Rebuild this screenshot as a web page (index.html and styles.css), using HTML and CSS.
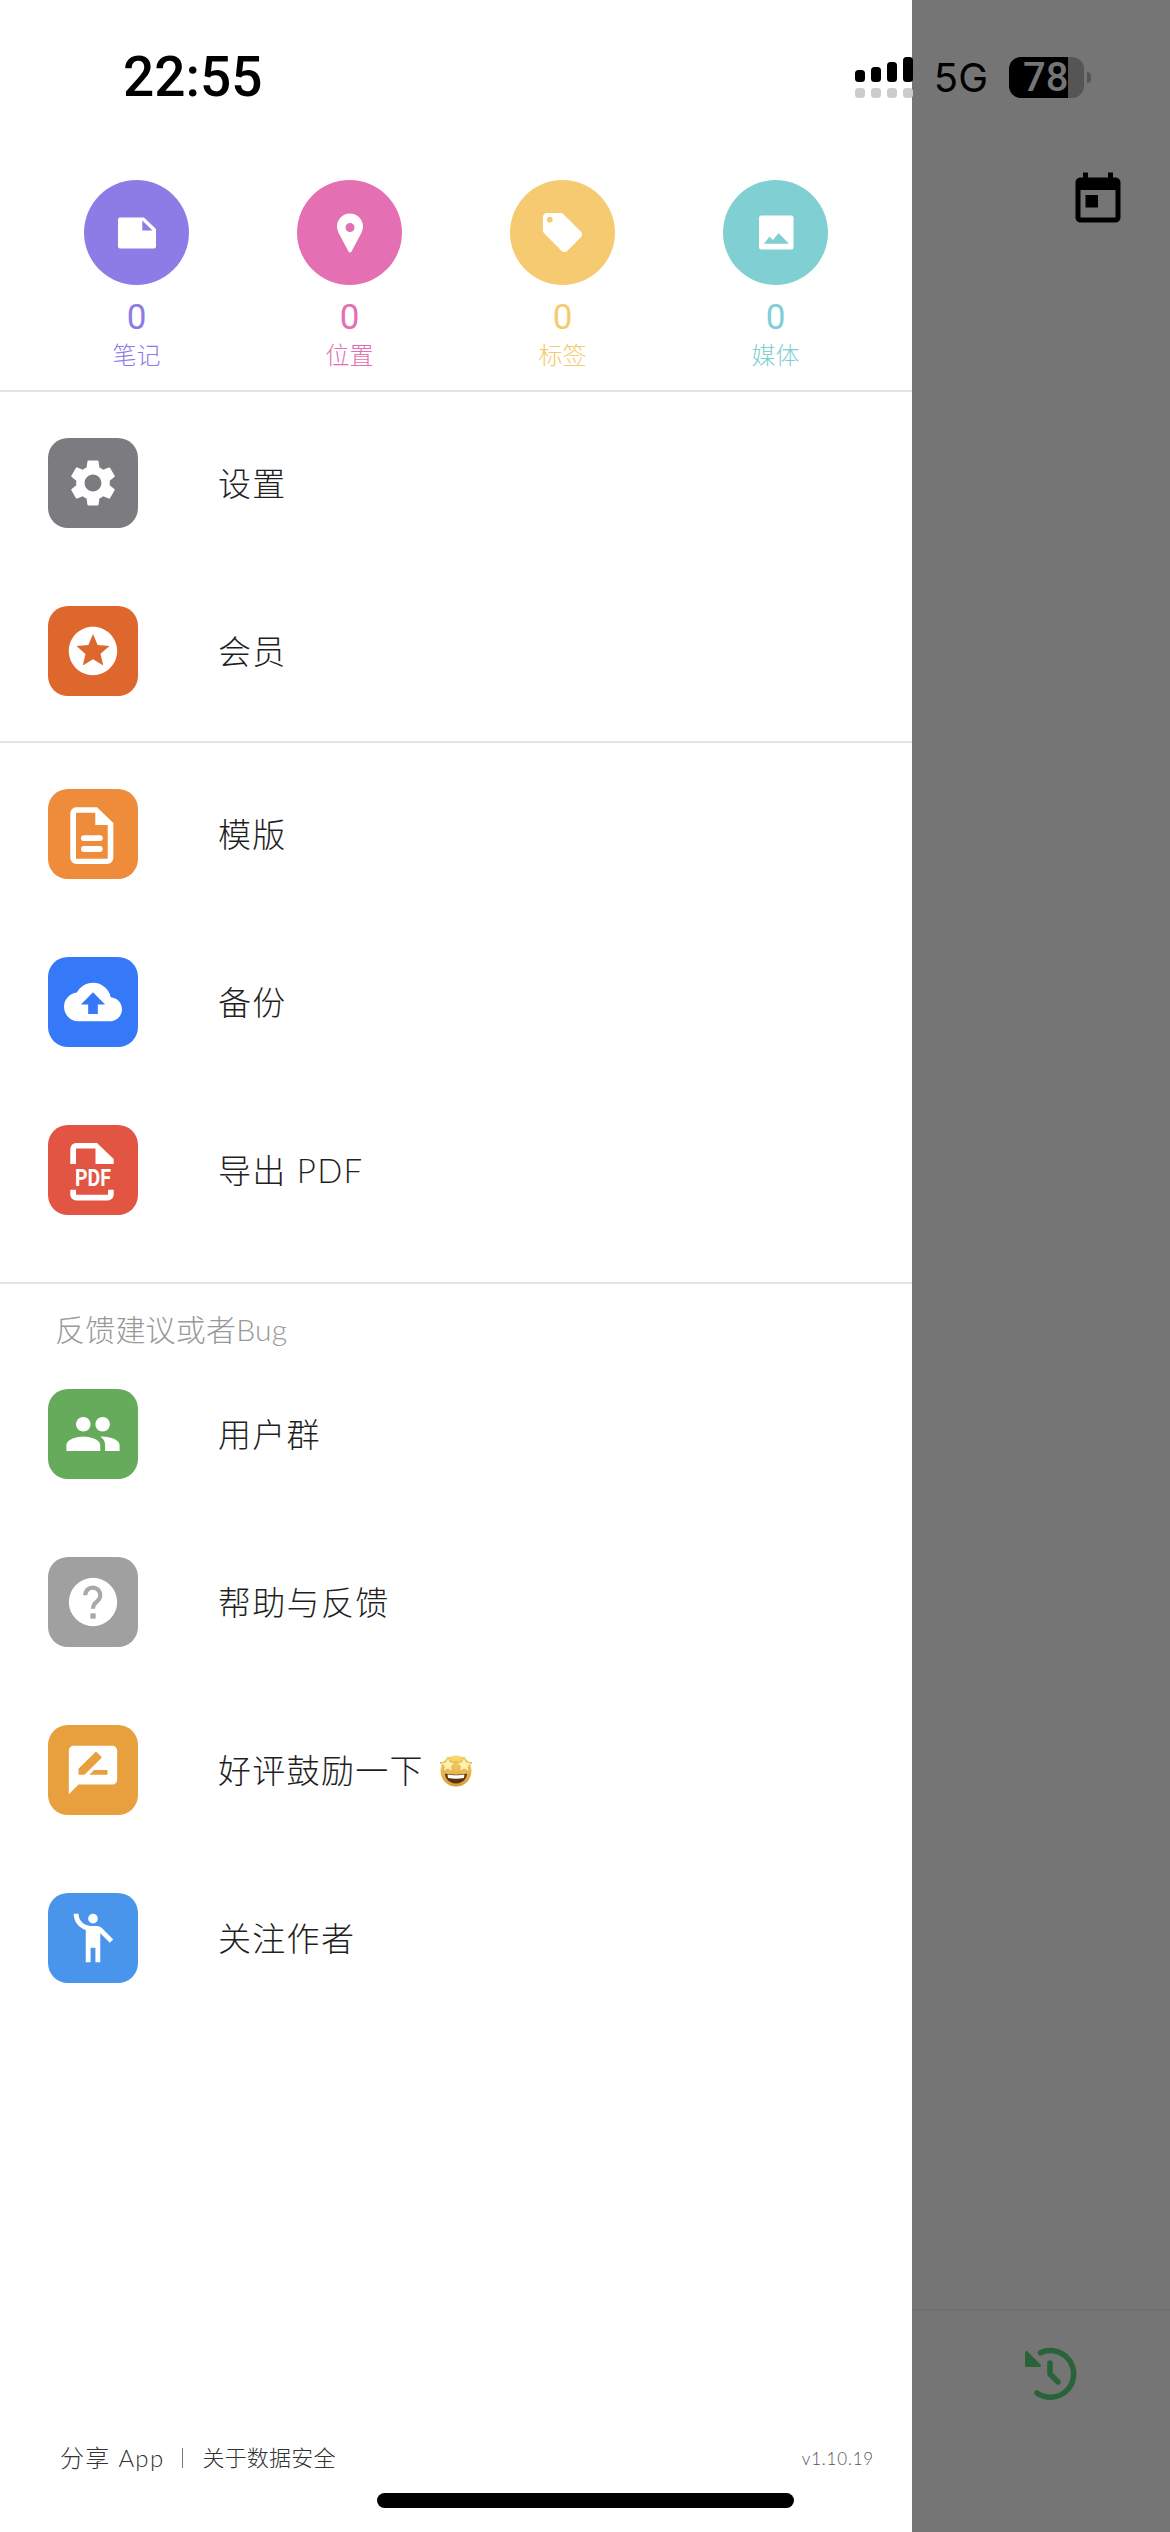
FILE: index.html
```html
<!DOCTYPE html>
<html lang="zh-CN">
<head>
  <meta charset="UTF-8">
  <title>Drawer menu</title>
  <link rel="stylesheet" href="styles.css">
</head>
<body>
<div class="screen">

  <!-- Side drawer -->
  <aside class="drawer">
    <section class="stats">
      <div class="stat stat-notes">
        <div class="stat-circle">
          <svg width="60" height="60" viewBox="0 0 60 60">
            <path class="white" d="M13 14.5H37L49 26V43.5a2 2 0 0 1-2 2H13a2 2 0 0 1-2-2V16.5a2 2 0 0 1 2-2z"/>
            <path class="tint" d="M35.3 17.5V27.5H45.5z"/>
          </svg>
        </div>
        <div class="stat-num">0</div>
        <div class="stat-label">笔记</div>
      </div>
      <div class="stat stat-places">
        <div class="stat-circle">
          <svg width="60" height="60" viewBox="0 0 60 60">
            <path class="white" fill-rule="evenodd" d="M30 10.5C22.8 10.5 17 16.3 17 23.5C17 27 18.5 30 20.5 33.5L28.5 48.5C29.2 49.8 30.8 49.8 31.5 48.5L39.5 33.5C41.5 30 43 27 43 23.5C43 16.3 37.2 10.5 30 10.5zM30 20a4.5 4.5 0 1 1 0 9a4.5 4.5 0 1 1 0-9z"/>
          </svg>
        </div>
        <div class="stat-num">0</div>
        <div class="stat-label">位置</div>
      </div>
      <div class="stat stat-tags">
        <div class="stat-circle">
          <svg width="47" height="47" viewBox="0 0 24 24">
            <path class="white" d="M21.41 11.58l-9-9C12.05 2.22 11.55 2 11 2H4c-1.1 0-2 .9-2 2v7c0 .55.22 1.05.59 1.42l9 9c.36.36.86.58 1.41.58.55 0 1.05-.22 1.41-.59l7-7c.37-.36.59-.86.59-1.41 0-.55-.23-1.06-.59-1.42zM5.5 7C4.67 7 4 6.33 4 5.5S4.67 4 5.5 4 7 4.67 7 5.5 6.33 7 5.5 7z"/>
          </svg>
        </div>
        <div class="stat-num">0</div>
        <div class="stat-label">标签</div>
      </div>
      <div class="stat stat-media">
        <div class="stat-circle">
          <svg width="60" height="60" viewBox="0 0 60 60">
            <rect class="white" x="13" y="12.5" width="34.5" height="34" rx="2.5"/>
            <path class="tint" d="M18 40.8L23.5 33.5L27 37L32.5 30L43 40.8z"/>
          </svg>
        </div>
        <div class="stat-num">0</div>
        <div class="stat-label">媒体</div>
      </div>
    </section>

    <section class="menu-group first-group">
      <div class="menu-row">
        <div class="tile tile-settings">
          <svg width="56" height="56" viewBox="0 0 24 24"><path d="M19.14 12.94c.04-.3.06-.61.06-.94 0-.32-.02-.64-.07-.94l2.03-1.58c.18-.14.23-.41.12-.61l-1.92-3.32c-.12-.22-.37-.29-.59-.22l-2.39.96c-.5-.38-1.03-.7-1.62-.94l-.36-2.54c-.04-.24-.24-.41-.48-.41h-3.84c-.24 0-.43.17-.47.41l-.36 2.54c-.59.24-1.13.57-1.62.94l-2.39-.96c-.22-.08-.47 0-.59.22L2.74 8.87c-.12.21-.08.47.12.61l2.03 1.58c-.05.3-.09.63-.09.94s.02.64.07.94l-2.03 1.58c-.18.14-.23.41-.12.61l1.92 3.32c.12.22.37.29.59.22l2.39-.96c.5.38 1.03.7 1.62.94l.36 2.54c.05.24.24.41.48.41h3.84c.24 0 .44-.17.47-.41l.36-2.54c.59-.24 1.13-.56 1.62-.94l2.39.96c.22.08.47 0 .59-.22l1.92-3.32c.12-.22.07-.47-.12-.61l-2.01-1.58zM12 15.6c-1.98 0-3.6-1.62-3.6-3.6s1.62-3.6 3.6-3.6 3.6 1.62 3.6 3.6-1.62 3.6-3.6 3.6z"/></svg>
        </div>
        <span class="menu-text">设置</span>
      </div>
      <div class="menu-row">
        <div class="tile tile-member">
          <svg width="58" height="58" viewBox="0 0 24 24"><path d="M11.99 2C6.47 2 2 6.48 2 12s4.47 10 9.99 10C17.52 22 22 17.52 22 12S17.52 2 11.99 2zm4.24 16L12 15.45 7.77 18l1.12-4.81-3.73-3.23 4.92-.42L12 5l1.92 4.53 4.92.42-3.73 3.23L16.23 18z"/></svg>
        </div>
        <span class="menu-text">会员</span>
      </div>
    </section>

    <section class="menu-group second-group">
      <div class="menu-row">
        <div class="tile tile-template">
          <svg width="90" height="90" viewBox="0 0 90 90">
            <path fill-rule="evenodd" d="M28 18.3H49L65.3 34V69a6 6 0 0 1-6 6H28.3a6 6 0 0 1-6-6V24.3a6 6 0 0 1 5.7-6zM28 23.7V69.7H59.7V36H47.3V23.7z"/>
            <rect x="33" y="46.3" width="21.7" height="5.7" rx="2.8"/>
            <rect x="33" y="57" width="21.7" height="6" rx="3"/>
          </svg>
        </div>
        <span class="menu-text">模版</span>
      </div>
      <div class="menu-row">
        <div class="tile tile-backup">
          <svg width="58" height="58" viewBox="0 0 24 24"><path d="M19.35 10.04C18.67 6.59 15.64 4 12 4 9.11 4 6.6 5.64 5.35 8.04 2.34 8.36 0 10.91 0 14c0 3.31 2.69 6 6 6h13c2.76 0 5-2.24 5-5 0-2.64-2.05-4.78-4.65-4.96zM14 13v4h-4v-4H7l5-5 5 5h-3z"/></svg>
        </div>
        <span class="menu-text">备份</span>
      </div>
      <div class="menu-row">
        <div class="tile tile-pdf">
          <svg width="90" height="90" viewBox="0 0 90 90">
            <path d="M28 18H49L65.7 34V39H47.5V23.5H28V39H22.3V24a6 6 0 0 1 5.7-6z"/>
            <text class="pdf-mark" x="27" y="61" textLength="36" lengthAdjust="spacingAndGlyphs">PDF</text>
            <path d="M22.3 64.7H28V69.7H60V64.7H65.7V69.4a6 6 0 0 1-6 6H28.3a6 6 0 0 1-6-6z"/>
          </svg>
        </div>
        <span class="menu-text">导出 PDF</span>
      </div>
    </section>

    <section class="menu-group third-group">
      <div class="section-title">反馈建议或者Bug</div>
      <div class="menu-row">
        <div class="tile tile-group">
          <svg width="58" height="58" viewBox="0 0 24 24"><path d="M16 11c1.66 0 2.99-1.34 2.99-3S17.66 5 16 5c-1.66 0-3 1.34-3 3s1.34 3 3 3zm-8 0c1.66 0 2.99-1.34 2.99-3S9.66 5 8 5C6.34 5 5 6.34 5 8s1.34 3 3 3zm0 2c-2.33 0-7 1.17-7 3.5V19h14v-2.5c0-2.33-4.67-3.5-7-3.5zm8 0c-.29 0-.62.02-.97.05 1.16.84 1.97 1.97 1.97 3.45V19h6v-2.5c0-2.33-4.67-3.5-7-3.5z"/></svg>
        </div>
        <span class="menu-text">用户群</span>
      </div>
      <div class="menu-row">
        <div class="tile tile-help">
          <svg width="58" height="58" viewBox="0 0 24 24">
            <circle cx="12" cy="12" r="10"/>
            <path class="help-hook" d="M8.8 9.2a3.1 3.1 0 1 1 5 2.4c-1 .8-1.8 1.4-1.8 3.2"/>
            <rect class="help-dot" x="10.9" y="16.7" width="2.2" height="2.2"/>
          </svg>
        </div>
        <span class="menu-text">帮助与反馈</span>
      </div>
      <div class="menu-row">
        <div class="tile tile-review">
          <svg width="58" height="58" viewBox="0 0 24 24"><path d="M20 2H4c-1.1 0-1.99.9-1.99 2L2 22l4-4h14c1.1 0 2-.9 2-2V4c0-1.1-.9-2-2-2zM6 14v-2.47l6.88-6.88c.2-.2.51-.2.71 0l1.77 1.77c.2.2.2.51 0 .71L8.47 14H6zm12 0h-7.5l2-2H18v2z"/></svg>
        </div>
        <span class="menu-text">好评鼓励一下</span>
        <!-- star-struck emoji -->
        <svg class="emoji" width="34" height="33" viewBox="0 0 34 33">
          <defs>
            <linearGradient id="faceGold" x1="0" y1="0" x2="0" y2="1">
              <stop offset="0" stop-color="#f8dc6c"/>
              <stop offset="1" stop-color="#dc9a34"/>
            </linearGradient>
          </defs>
          <circle cx="17" cy="17" r="15.5" fill="url(#faceGold)"/>
          <path d="M6 19.5C12 21 22 21 28 19.5C27.5 26 22.5 29.5 17 29.5C11.5 29.5 6.5 26 6 19.5z" fill="#5a3412"/>
          <path d="M8.5 20.6C13.5 21.6 20.5 21.6 25.5 20.6L25 24C20 25 14 25 9 24z" fill="#fff"/>
          <path d="M9 3L11.3 8L16.6 8.7L12.7 12.3L13.7 17.6L9 15L4.3 17.6L5.3 12.3L1 8.7L6.7 8z" fill="#fbf0b0" stroke="#e0a93c" stroke-width=".8"/>
          <path d="M25 3L27.3 8L33 8.7L29.3 12.3L30.3 17.6L25 15L20.3 17.6L21.3 12.3L17.4 8.7L22.7 8z" fill="#fbf0b0" stroke="#e0a93c" stroke-width=".8"/>
        </svg>
      </div>
      <div class="menu-row">
        <div class="tile tile-follow">
          <svg width="58" height="58" viewBox="0 0 24 24"><circle cx="12" cy="4" r="2"/><path d="M15.89 8.11C15.5 7.72 14.83 7 13.53 7h-2.54C8.24 6.99 6 4.75 6 2H4c0 3.16 2.11 5.84 5 6.71V22h2v-6h2v6h2V10.05L18.95 14l1.41-1.41-4.47-4.48z"/></svg>
        </div>
        <span class="menu-text">关注作者</span>
      </div>
    </section>

    <footer class="drawer-footer">
      <span class="footer-share">分享 App</span>
      <span class="footer-sep"></span>
      <span class="footer-link">关于数据安全</span>
      <span class="footer-version">v1.10.19</span>
    </footer>
  </aside>

  <!-- Dimmed page behind the drawer -->
  <div class="backdrop">
    <svg class="calendar-icon" width="60" height="60" viewBox="0 0 24 24"><path d="M19 3h-1V1h-2v2H8V1H6v2H5c-1.11 0-1.99.9-1.99 2L3 19c0 1.1.89 2 2 2h14c1.1 0 2-.9 2-2V5c0-1.1-.9-2-2-2zm0 16H5V8h14v11zM7 10h5v5H7z"/></svg>
    <div class="backdrop-bar">
      <svg width="56" height="56" viewBox="0 0 56 56" fill="none" stroke="#2a6339" stroke-width="5.5" stroke-linecap="round" stroke-linejoin="round">
        <path d="M18.5 7.8A23.3 23.3 0 1 1 15 48"/>
        <path d="M28 18V29L36 37"/>
        <path d="M4.5 7.5V20.5H17.5z" fill="#2a6339" stroke-width="3"/>
      </svg>
    </div>
  </div>

  <!-- System status bar and home indicator -->
  <div class="status-bar">
    <span class="status-time">22:55</span>
    <div class="status-right">
      <svg class="signal" width="58" height="41" viewBox="0 0 58 41">
        <rect x="0" y="13" width="10" height="12" rx="3.5"/>
        <rect x="16" y="10" width="10" height="15" rx="3.5"/>
        <rect x="32" y="5" width="10" height="20" rx="3.5"/>
        <rect x="48" y="0" width="10" height="25" rx="3.5"/>
        <g class="signal-off">
          <rect x="0" y="31" width="10" height="10" rx="3.5"/>
          <rect x="16" y="31" width="10" height="10" rx="3.5"/>
          <rect x="32" y="31" width="10" height="10" rx="3.5"/>
          <rect x="48" y="31" width="10" height="10" rx="3.5"/>
        </g>
      </svg>
      <span class="status-net">5G</span>
      <div class="battery">78</div>
    </div>
  </div>
  <div class="home-indicator"></div>
</div>
</body>
</html>
```

FILE: styles.css
```css
/* Basic reset */
body {
  margin: 0;
  padding: 0;
  font-family: Lato, "Noto Sans CJK SC", sans-serif;
  color: #333;
  background: #757575;
}

.screen {
  position: relative;
  display: flex;
  width: 1170px;
  height: 2532px;
  overflow: hidden;
}

/* Drawer */
.drawer {
  display: flex;
  flex-direction: column;
  width: 912px;
  background-color: #fff;
}

/* Stats row */
.stats {
  display: grid;
  grid-template-columns: repeat(4, 213px);
  height: 210px;
  padding: 180px 30px 0;
  border-bottom: 2px solid #e4e4e7;
}
.stat {
  display: flex;
  flex-direction: column;
  align-items: center;
}
.stat-notes { color: #8d7be6; }
.stat-places { color: #e46fb3; }
.stat-tags { color: #f6ca70; }
.stat-media { color: #80cfd3; }
.stat-circle {
  display: flex;
  align-items: center;
  justify-content: center;
  width: 105px;
  height: 105px;
  border-radius: 50%;
  background-color: currentColor;
}
.white { fill: #fff; }
.tint { fill: currentColor; }
.stat-num {
  margin-top: 15px;
  font-family: Roboto, sans-serif;
  font-size: 35px;
  font-weight: 400;
  line-height: 36px;
}
.stat-label {
  margin-top: 4px;
  font-size: 24px;
  font-weight: 300;
  line-height: 30px;
}

/* Menu */
.menu-group {
  border-bottom: 2px solid #e4e4e7;
}
.first-group { padding: 7px 0 6px; }
.second-group { padding: 7px 0 28px; }
.third-group { border-bottom: 0; }
.section-title {
  padding: 29px 0 4px 55px;
  font-size: 30px;
  font-weight: 300;
  line-height: 33px;
  letter-spacing: 0.2px;
  color: #999;
}
.menu-row {
  display: flex;
  align-items: center;
  padding: 39px 0 39px 48px;
}
.tile {
  display: flex;
  align-items: center;
  justify-content: center;
  flex-shrink: 0;
  width: 90px;
  height: 90px;
  margin-right: 80px;
  border-radius: 20px;
}
.tile svg { fill: #fff; }
.tile-settings { background-color: #7b7b80; }
.tile-member { background-color: #de672d; }
.tile-template { background-color: #ef8c3c; }
.tile-backup { background-color: #3679f8; }
.tile-pdf { background-color: #e25542; }
.tile-group { background-color: #66ab5c; }
.tile-help { background-color: #a0a0a0; }
.tile-review { background-color: #e8a03f; }
.tile-follow { background-color: #4a95ec; }
.help-hook {
  fill: none;
  stroke: #a8a8a8;
  stroke-width: 1.7;
}
.tile svg .help-dot { fill: #a8a8a8; }
.pdf-mark {
  font-family: Roboto, sans-serif;
  font-size: 24px;
  font-weight: 700;
}
.menu-text {
  font-size: 33px;
  font-weight: 300;
  line-height: 40px;
  letter-spacing: 1.3px;
  color: #1f1f1f;
}
.emoji {
  margin-left: 15px;
}

/* Footer */
.drawer-footer {
  display: flex;
  align-items: center;
  margin-top: auto;
  margin-bottom: 60px;
  padding: 0 38px 0 60px;
  font-weight: 300;
  color: #333;
}
.footer-share {
  font-size: 24px;
  line-height: 28px;
  letter-spacing: 1.3px;
}
.footer-sep {
  width: 1px;
  height: 20px;
  margin: 0 19px 0 18px;
  background-color: #777;
}
.footer-link {
  font-size: 22px;
  line-height: 28px;
  letter-spacing: 0.2px;
}
.footer-version {
  margin-left: auto;
  font-size: 17px;
  letter-spacing: 0.8px;
  color: #555;
}

/* Page behind the drawer */
.backdrop {
  display: flex;
  flex-direction: column;
  flex: 1;
  background-color: #757575;
}
.calendar-icon {
  align-self: flex-end;
  margin: 170px 42px 0 0;
}
.backdrop-bar {
  display: flex;
  height: 223px;
  margin-top: auto;
  padding: 34px 0 0 110px;
  box-sizing: border-box;
  border-top: 2px solid #6f6f6f;
}

/* Status bar */
.status-bar {
  position: absolute;
  top: 57px;
  left: 123px;
  display: flex;
  justify-content: space-between;
  width: 961px;
  font-family: Inter, sans-serif;
  color: #000;
}
.status-time {
  font-family: Roboto, sans-serif;
  font-size: 55px;
  font-weight: 500;
  line-height: 41px;
}
.status-right {
  display: flex;
  align-items: center;
}
.signal-off { fill: #ccc; }
.status-net {
  margin: 0 21px;
  font-size: 40px;
  line-height: 41px;
}
.battery {
  position: relative;
  box-sizing: border-box;
  width: 75px;
  height: 41px;
  padding-left: 14px;
  border-radius: 12px;
  background: linear-gradient(to right, #000 59px, #555 59px);
  font-family: Roboto, sans-serif;
  font-size: 40px;
  font-weight: 500;
  line-height: 41px;
  color: #757575;
}
.battery::after {
  content: "";
  position: absolute;
  top: 15px;
  left: 78px;
  width: 4px;
  height: 11px;
  border-radius: 0 6px 6px 0;
  background-color: #555;
}
.home-indicator {
  position: absolute;
  top: 2493px;
  left: 377px;
  width: 417px;
  height: 15px;
  border-radius: 8px;
  background-color: #000;
}
```
